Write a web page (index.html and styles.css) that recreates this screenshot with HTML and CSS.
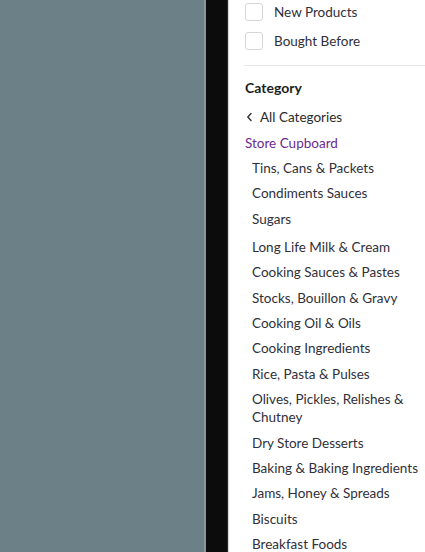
FILE: index.html
```html
<!DOCTYPE html>
<html>
<head>
<meta charset="utf-8">
<link rel="stylesheet" href="styles.css">
</head>
<body>
<div class="screen">
  <div class="backdrop"></div>
  <div class="edge"></div>
  <div class="gutter"></div>
  <aside class="panel">
    <label class="check"><span class="box"></span><span>New Products</span></label>
    <label class="check"><span class="box"></span><span>Bought Before</span></label>
    <hr class="divider">
    <h3 class="heading">Category</h3>
    <a class="back"><svg class="chev" width="7" height="10" viewBox="0 0 7 10"><path d="M5 1.5 L1.8 5 L5 8.5" fill="none" stroke="#333" stroke-width="1.4" stroke-linecap="round" stroke-linejoin="round"/></svg>All Categories</a>
    <div class="current">Store Cupboard</div>
    <ul class="list">
      <li>Tins, Cans &amp; Packets</li>
      <li>Condiments Sauces</li>
      <li class="gap">Sugars</li>
      <li>Long Life Milk &amp; Cream</li>
      <li>Cooking Sauces &amp; Pastes</li>
      <li>Stocks, Bouillon &amp; Gravy</li>
      <li>Cooking Oil &amp; Oils</li>
      <li>Cooking Ingredients</li>
      <li>Rice, Pasta &amp; Pulses</li>
      <li>Olives, Pickles, Relishes &amp; Chutney</li>
      <li>Dry Store Desserts</li>
      <li>Baking &amp; Baking Ingredients</li>
      <li>Jams, Honey &amp; Spreads</li>
      <li>Biscuits</li>
      <li>Breakfast Foods</li>
    </ul>
  </aside>
</div>
</body>
</html>
```
FILE: styles.css
```css
* { box-sizing: border-box; }
html, body { margin: 0; padding: 0; height: 100%; overflow: hidden; }
body { font-family: Lato, "Open Sans", sans-serif; }
.screen { display: flex; height: 552px; width: 425px; }
.backdrop { width: 204px; flex: none; background: #6c8187; }
.edge { width: 2px; flex: none; background: #8a9699; }
.gutter { width: 22px; flex: none; background: #0c0c0c; border-right: 1px solid #2a2a2a; }
.panel { flex: 1; background: #fff; border-left: 1px solid #d8d8d8; padding: 3px 0 0 16px; min-width: 0; color: #30303a; font-size: 13.5px; }
.check { display: flex; align-items: center; height: 18px; margin-bottom: 11px; white-space: nowrap; }
.box { width: 18px; height: 18px; border: 1px solid #d6d6d6; border-radius: 3px; margin-right: 11px; flex: none; }
.divider { border: 0; border-top: 1px solid #e8e8e8; margin: 15px 0 0 -1px; }
.heading { margin: 13px 0 0; font-size: 14px; font-weight: 700; color: #1e1e1e; line-height: 18px; }
.back { display: flex; align-items: center; margin-top: 11px; line-height: 18px; color: #2a2a2a; white-space: nowrap; }
.chev { margin: 0 7px 0 1px; }
.current { margin-top: 8px; line-height: 18px; color: #6a2c8e; white-space: nowrap; }
.list { list-style: none; margin: 7px 0 0; padding: 0 6px 0 7px; }
.list li { line-height: 18px; padding-bottom: 7.4px; }
.list li.gap { padding-bottom: 10px; }
```
